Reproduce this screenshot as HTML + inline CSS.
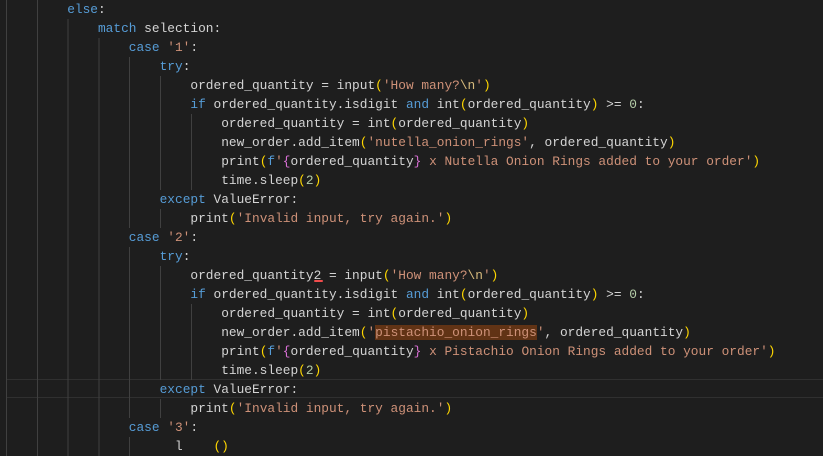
<!DOCTYPE html>
<html><head><meta charset="utf-8"><style>
html,body{margin:0;padding:0;background:#1e1e1e;width:823px;height:442px;overflow:hidden}
#ed{position:absolute;left:5.6px;top:-0.5px;font-family:"Liberation Mono",monospace;font-size:12.83px;color:#d4d4d4}
.l{height:19px;line-height:19px;position:relative;white-space:pre}
.i{display:inline-block;height:19px;vertical-align:top;background:repeating-linear-gradient(to right,#404040 0 1px,transparent 1px 30.8px)}
.k{color:#569cd6}.s{color:#ce9178}.e{color:#d7ba7d}.b1{color:#ffd700}.b2{color:#da70d6}.n{color:#b5cea8}
.cur{position:absolute;left:6px;right:0;top:379px;height:17px;border:1px solid #303030;border-right:none}
.hl{background:#613315}
.sq{position:relative}
.sq:after{content:"";position:absolute;left:0;right:-2px;bottom:1px;height:2px;border-radius:2px;background:#f14c4c}
</style></head><body>
<div class="cur"></div>
<div id="ed">
<div class="l"><span class="i" style="width:61.6px"></span><span class="k">else</span>:</div>
<div class="l"><span class="i" style="width:92.4px"></span><span class="k">match</span> selection:</div>
<div class="l"><span class="i" style="width:123.2px"></span><span class="k">case</span> <span class="s">'1'</span>:</div>
<div class="l"><span class="i" style="width:154px"></span><span class="k">try</span>:</div>
<div class="l"><span class="i" style="width:184.8px"></span>ordered_quantity = input<span class="b1">(</span><span class="s">'How many?</span><span class="e">\n</span><span class="s">'</span><span class="b1">)</span></div>
<div class="l"><span class="i" style="width:184.8px"></span><span class="k">if</span> ordered_quantity.isdigit <span class="k">and</span> int<span class="b1">(</span>ordered_quantity<span class="b1">)</span> &gt;= <span class="n">0</span>:</div>
<div class="l"><span class="i" style="width:215.6px"></span>ordered_quantity = int<span class="b1">(</span>ordered_quantity<span class="b1">)</span></div>
<div class="l"><span class="i" style="width:215.6px"></span>new_order.add_item<span class="b1">(</span><span class="s">'nutella_onion_rings'</span>, ordered_quantity<span class="b1">)</span></div>
<div class="l"><span class="i" style="width:215.6px"></span>print<span class="b1">(</span><span class="k">f</span><span class="s">'</span><span class="b2">{</span>ordered_quantity<span class="b2">}</span><span class="s"> x Nutella Onion Rings added to your order'</span><span class="b1">)</span></div>
<div class="l"><span class="i" style="width:215.6px"></span>time.sleep<span class="b1">(</span><span class="n">2</span><span class="b1">)</span></div>
<div class="l"><span class="i" style="width:154px"></span><span class="k">except</span> ValueError:</div>
<div class="l"><span class="i" style="width:184.8px"></span>print<span class="b1">(</span><span class="s">'Invalid input, try again.'</span><span class="b1">)</span></div>
<div class="l"><span class="i" style="width:123.2px"></span><span class="k">case</span> <span class="s">'2'</span>:</div>
<div class="l"><span class="i" style="width:154px"></span><span class="k">try</span>:</div>
<div class="l"><span class="i" style="width:184.8px"></span>ordered_quantity<span class="sq">2</span> = input<span class="b1">(</span><span class="s">'How many?</span><span class="e">\n</span><span class="s">'</span><span class="b1">)</span></div>
<div class="l"><span class="i" style="width:184.8px"></span><span class="k">if</span> ordered_quantity.isdigit <span class="k">and</span> int<span class="b1">(</span>ordered_quantity<span class="b1">)</span> &gt;= <span class="n">0</span>:</div>
<div class="l"><span class="i" style="width:215.6px"></span>ordered_quantity = int<span class="b1">(</span>ordered_quantity<span class="b1">)</span></div>
<div class="l"><span class="i" style="width:215.6px"></span>new_order.add_item<span class="b1">(</span><span class="s">'<span class="hl">pistachio_onion_rings</span>'</span>, ordered_quantity<span class="b1">)</span></div>
<div class="l"><span class="i" style="width:215.6px"></span>print<span class="b1">(</span><span class="k">f</span><span class="s">'</span><span class="b2">{</span>ordered_quantity<span class="b2">}</span><span class="s"> x Pistachio Onion Rings added to your order'</span><span class="b1">)</span></div>
<div class="l"><span class="i" style="width:215.6px"></span>time.sleep<span class="b1">(</span><span class="n">2</span><span class="b1">)</span></div>
<div class="l"><span class="i" style="width:154px"></span><span class="k">except</span> ValueError:</div>
<div class="l"><span class="i" style="width:184.8px"></span>print<span class="b1">(</span><span class="s">'Invalid input, try again.'</span><span class="b1">)</span></div>
<div class="l"><span class="i" style="width:123.2px"></span><span class="k">case</span> <span class="s">'3'</span>:</div>
<div class="l"><span class="i" style="width:154px"></span>  l    <span class="b1">()</span></div>
</div>
</body></html>
